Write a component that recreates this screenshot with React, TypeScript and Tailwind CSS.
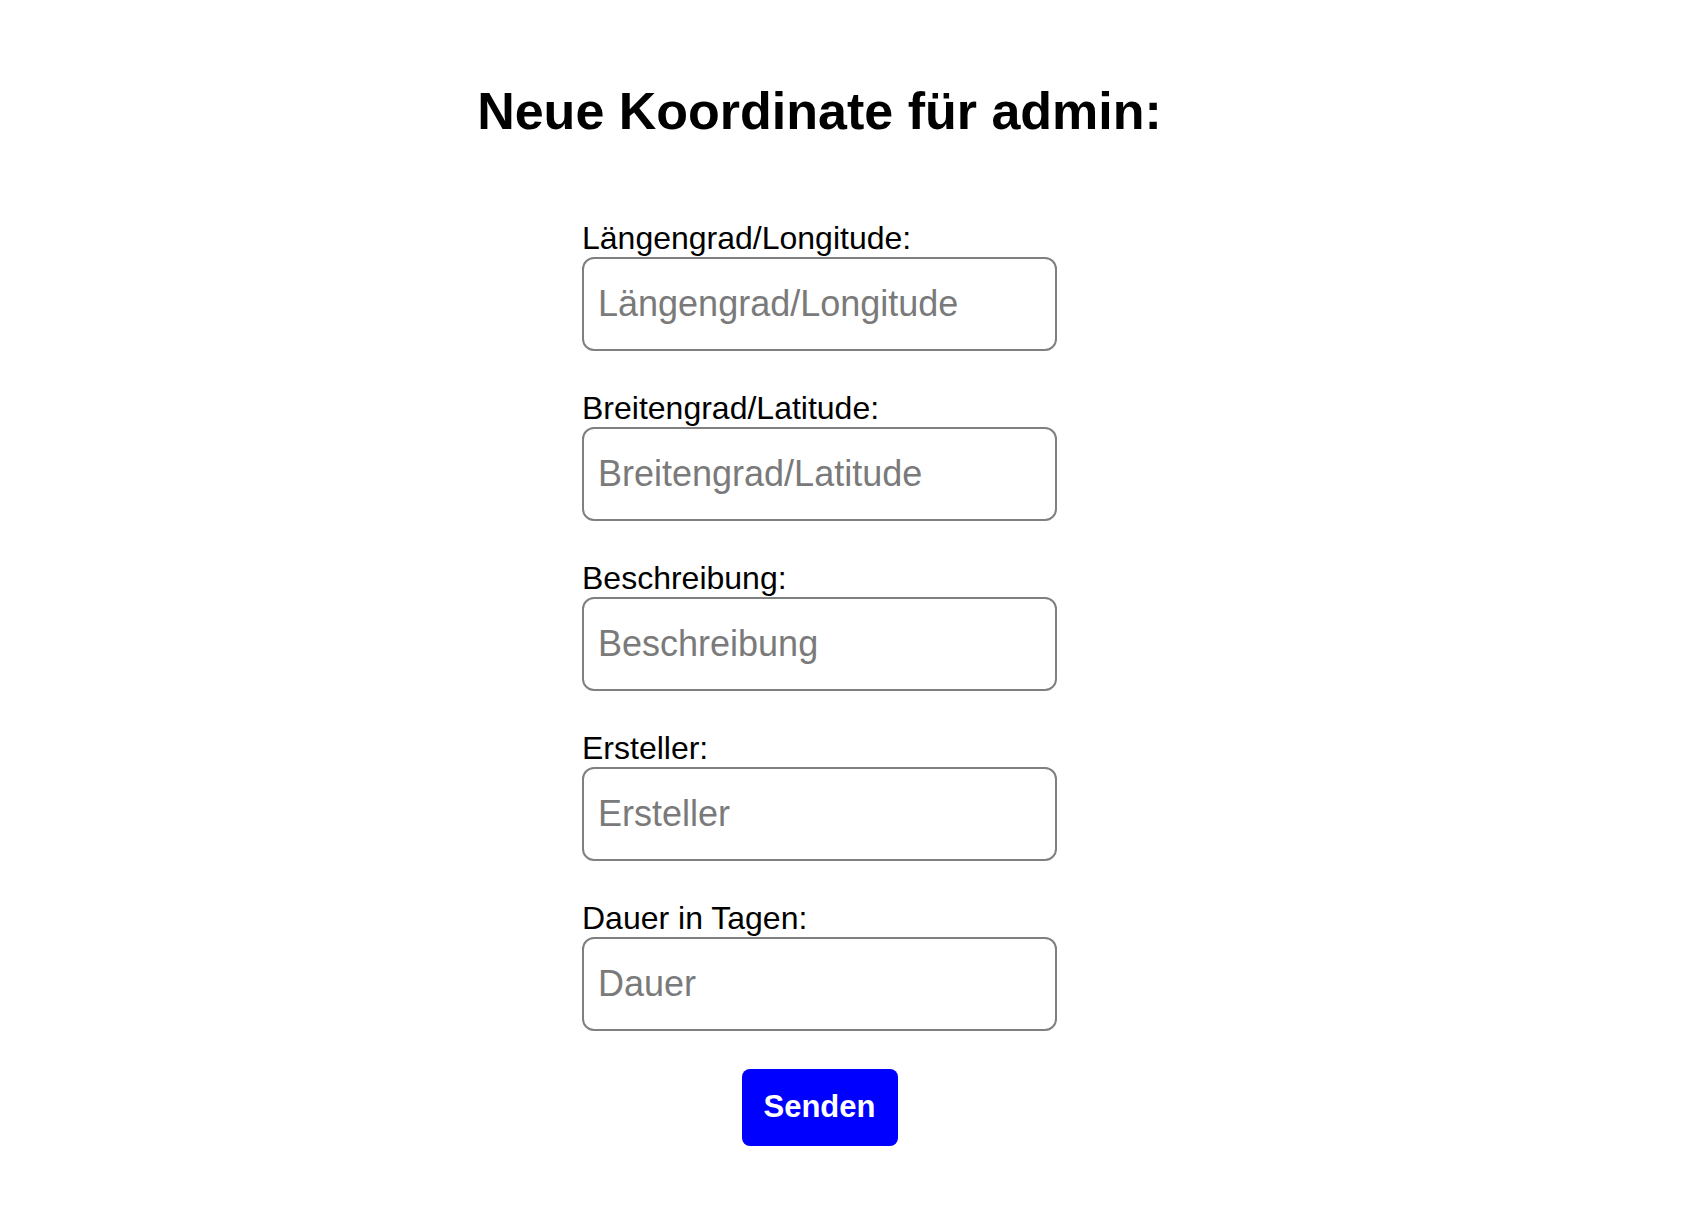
import React from 'react';

const fields = [
  { label: 'Längengrad/Longitude:', placeholder: 'Längengrad/Longitude' },
  { label: 'Breitengrad/Latitude:', placeholder: 'Breitengrad/Latitude' },
  { label: 'Beschreibung:', placeholder: 'Beschreibung' },
  { label: 'Ersteller:', placeholder: 'Ersteller' },
  { label: 'Dauer in Tagen:', placeholder: 'Dauer' },
];

export default function App() {
  return (
    <div
      className="min-h-screen bg-white pr-[57px] flex flex-col items-center text-black"
      style={{ fontFamily: '"Liberation Sans", Arial, Helvetica, sans-serif' }}
    >
      <h1 className="mt-[81px] text-[52px] leading-[60px] font-bold">Neue Koordinate für admin:</h1>

      {/* Form */}
      <form
        className="mt-[78px] w-[475px] flex flex-col gap-[38px]"
        onSubmit={(e) => e.preventDefault()}
      >
        {fields.map((f) => (
          <div key={f.label} className="flex flex-col">
            <label className="block text-[32px] leading-[38px]">{f.label}</label>
            <input
              type="text"
              placeholder={f.placeholder}
              className="h-[94px] w-full rounded-[12px] border-2 border-[#808080] bg-white px-[14px] text-[36px] placeholder:text-[#7a7a7a] outline-none"
            />
          </div>
        ))}
        <div className="flex justify-center">
          <button
            type="submit"
            className="h-[77px] w-[156px] rounded-[8px] bg-[#0000ff] text-[31px] font-bold text-white"
          >
            Senden
          </button>
        </div>
      </form>
    </div>
  );
}
